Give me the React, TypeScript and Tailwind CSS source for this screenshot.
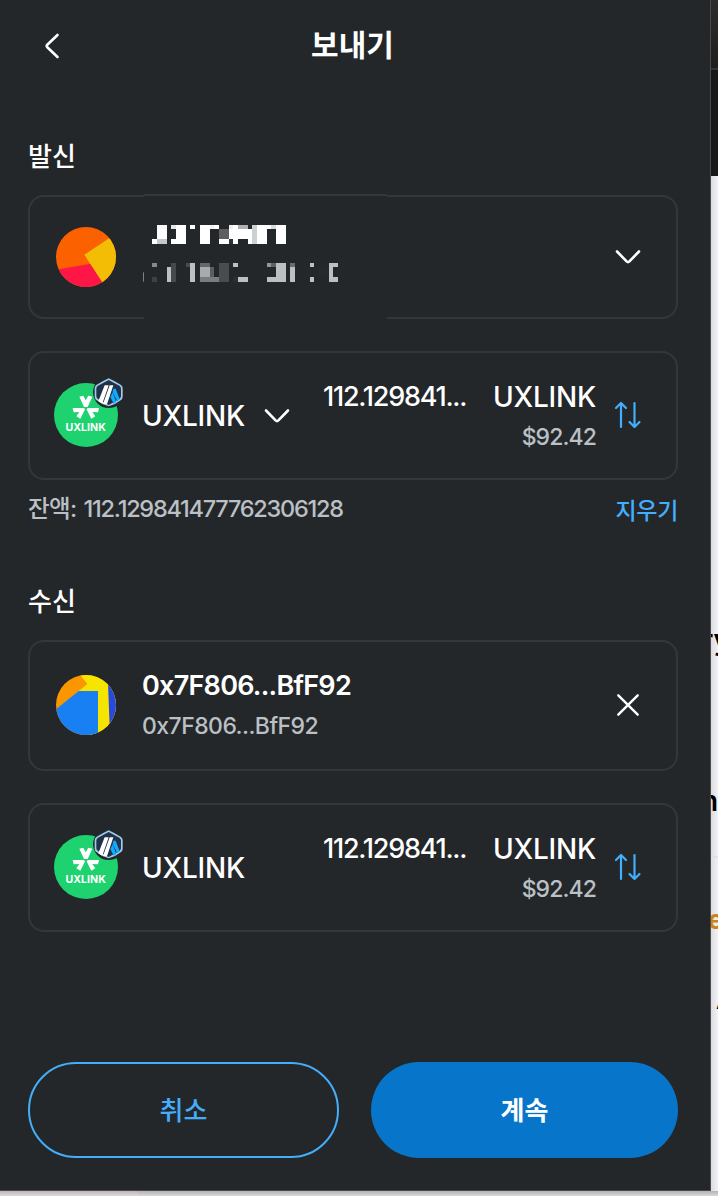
import React from 'react';

const W = '#ffffff';
const L = '#bbc0c5';

// [x, y, width, height, fill]
const nameBlocks: [number, number, number, number, string][] = [
  [36, 72, 15, 15, W],
  [51, 30, 30, 12, '#f8f8f8'],
  [51, 42, 30, 30, W],
  [51, 72, 30, 15, '#c4c8c8'],
  [93, 30, 15, 12, '#e6e7e8'],
  [93, 72, 15, 15, W],
  [108, 30, 30, 57, W],
  [150, 30, 15, 12, W],
  [180, 30, 30, 57, W],
  [210, 30, 12, 12, '#f2f2f2'],
  [222, 30, 15, 12, W],
  [237, 42, 30, 30, '#5d5e60'],
  [237, 72, 30, 15, W],
  [267, 30, 12, 12, '#eeeeee'],
  [267, 42, 12, 30, W],
  [267, 72, 12, 15, '#303336'],
  [279, 30, 15, 57, W],
  [294, 30, 30, 12, '#afb0b2'],
  [294, 42, 30, 30, W],
  [324, 42, 12, 30, W],
  [324, 72, 12, 15, W],
  [336, 30, 15, 57, '#cdd0d0'],
  [351, 30, 30, 57, W],
  [381, 30, 12, 12, W],
  [393, 30, 15, 12, '#dadcdc'],
  [408, 30, 30, 57, W],
  [9, 172, 3, 28, '#7d8184'],
  [36, 144, 15, 12, '#85898c'],
  [36, 186, 15, 15, '#3e4144'],
  [81, 156, 12, 45, L],
  [93, 144, 15, 57, '#46494c'],
  [138, 144, 12, 12, '#484b4e'],
  [150, 144, 15, 57, L],
  [180, 144, 30, 12, '#64676a'],
  [180, 156, 30, 30, '#a7abaf'],
  [210, 156, 12, 30, '#5b5e61'],
  [180, 186, 57, 15, '#797d80'],
  [237, 144, 30, 57, '#4a4d50'],
  [279, 144, 15, 12, L],
  [279, 186, 15, 15, '#2c2f32'],
  [294, 186, 30, 15, L],
  [381, 144, 12, 12, '#929699'],
  [393, 144, 15, 12, '#5f6265'],
  [408, 144, 30, 57, L],
  [381, 186, 27, 15, L],
  [450, 144, 15, 12, '#6a6d70'],
  [450, 156, 15, 45, L],
  [510, 144, 12, 12, L],
  [510, 186, 12, 15, L],
  [537, 156, 30, 30, '#26292c'],
  [567, 144, 27, 12, L],
  [567, 156, 12, 30, L],
  [567, 186, 27, 15, L],
];

const TokenLogo: React.FC = () => (
  <svg width="80" height="85" viewBox="0 0 240 255" className="block shrink-0">
    <circle cx="108" cy="135" r="96" fill="#1dd26f" />
    <g fill="#fff">
      <path d="M88 80 L100 77 L107 91 L115 77 L127 80 L113 111 L102 111 Z" />
      <path d="M68 114 H99 C105 115 106 118 103 122 L91 146 L79 139 L88 126 L71 127 Z" />
      <path d="M147 114 H116 C110 115 109 118 112 122 L124 146 L136 139 L127 126 L144 127 Z" />
    </g>
    <text x="107" y="183" textAnchor="middle" textLength="121" lengthAdjust="spacingAndGlyphs" fontFamily="Inter, sans-serif" fontWeight="700" fontSize="32" fill="#fff">UXLINK</text>
    <circle cx="176" cy="67" r="47" fill="#24272a" />
    <path d="M176 25 Q195 34 212 44 Q218 48 218 55 V80 Q218 87 212 91 Q195 105 176 109 Q157 105 140 91 Q134 87 134 80 V55 Q134 48 140 44 Q157 34 176 25 Z" fill="#9dccec" />
    <path d="M176 30 L208 47 Q213 50 213 56 V78 Q213 84 208 87 L176 105 L144 87 Q139 84 139 78 V56 Q139 50 144 47 Z" fill="#213147" />
    <path d="M164 46 H176 L157 101 L145 94 Z M179 46 H190 L171 103 L159 102 Z" fill="#fff" />
    <path d="M190 56 L197 56 L209 88 L202 94 L188 66 Z M184 75 L188 67 L199 96 L191 101 L181 81 Z" fill="#12aaff" />
  </svg>
);

const SwapArrows: React.FC = () => (
  <svg width="28" height="28" viewBox="0 0 28 28" fill="none" stroke="#43aefc" strokeWidth="2.2" strokeLinecap="round" strokeLinejoin="round" className="block shrink-0">
    <path d="M7 26V2M2 7L7 2l5 5M20.5 2v24M15.5 21l5 5 5-5" />
  </svg>
);

const Chevron: React.FC = () => (
  <svg width="26" height="16" viewBox="0 0 26 16" fill="none" stroke="#fff" strokeWidth="2.6" strokeLinecap="round" strokeLinejoin="round" className="block shrink-0">
    <path d="M2 2.5L11.6 12.4Q13 13.7 14.4 12.4L24 2.5" />
  </svg>
);

const AssetCard: React.FC<{ selectable?: boolean }> = ({ selectable }) => (
  <div className="h-[129px] border-2 border-[#34373a] rounded-2xl flex items-start">
    <div className="w-28 pl-5 pt-[17px] shrink-0">
      <TokenLogo />
    </div>
    <div className="w-[181px] h-[126px] flex items-center gap-[19px] text-[28px] font-medium text-white shrink-0">
      <span className="tracking-[-0.2px]">UXLINK</span>
      {selectable && <Chevron />}
    </div>
    <div className="w-[273px] pt-6 shrink-0">
      <div className="flex justify-between text-[28px] leading-10 font-medium text-white">
        <span className="text-[27px] tracking-[-1.25px]">112.129841...</span>
        <span className="tracking-[-0.2px]">UXLINK</span>
      </div>
      <div className="text-right text-[23px] leading-10 font-medium text-[#bbc0c5] tracking-[-0.9px]">$92.42</div>
    </div>
    <div className="pl-[18px] pt-[48px]">
      <SwapArrows />
    </div>
  </div>
);

const SendPanel: React.FC = () => (
  <main className="w-[711px] h-[1191px] bg-[#24272a] border-r border-b border-[#484b4c] px-7 shrink-0">
    <header className="h-[90px] flex items-center">
      <svg width="20" height="28" viewBox="0 0 20 28" fill="none" stroke="#fff" strokeWidth="2.6" strokeLinecap="round" strokeLinejoin="round" className="ml-4 mt-px">
        <path d="M13.5 3L3.3 12.8Q2 14 3.3 15.2L13.5 25" />
      </svg>
      <h1 className="w-[577px] text-center text-[30px] font-bold text-white leading-10">보내기</h1>
    </header>

    <h2 className="h-[105px] pt-[47px] text-[26px] leading-10 font-medium text-white">발신</h2>
    <div className="relative w-[650px] h-[124px] border-2 border-[#34373a] rounded-2xl flex items-center justify-between pl-[26px] pr-[35px]">
      <svg width="60" height="60" viewBox="0 0 180 180" className="rounded-full">
        <path fill="#fc6100" d="M0 0h180v180H0z" />
        <path fill="#fe1646" d="M0 128L112 109 160 180H0z" />
        <path fill="#f3bc05" d="M85 83L180 20V180H148z" />
      </svg>
      <Chevron />
      <div className="absolute left-[114px] -top-[3px] w-[243px] h-[127px] bg-[#24272a] border-t-2 border-[#34373a]" />
      <svg width="205" height="80" viewBox="0 0 615 240" className="absolute left-[110px] top-[18px]">
        {nameBlocks.map(([x, y, w, h, fill], i) => (
          <rect key={i} x={x} y={y} width={w} height={h} fill={fill} />
        ))}
      </svg>
    </div>

    <div className="w-[650px] mt-8">
      <AssetCard selectable />
      <div className="h-[60px] pt-[9px] flex justify-between text-[23.5px] leading-10 font-medium text-[#bbc0c5]">
        <div className="flex gap-[7px]">
          <span className="tracking-[-0.6px]">잔액:</span>
          <span className="tracking-[-1.25px]">112.129841477762306128</span>
        </div>
        <span className="text-[23px] text-[#43aefc] pt-[2px] tracking-[-0.3px]">지우기</span>
      </div>
    </div>

    <h2 className="h-[100px] pt-[42px] text-[26px] leading-10 font-medium text-white">수신</h2>
    <div className="w-[650px] h-[131px] border-2 border-[#34373a] rounded-2xl flex items-center pl-[26px] pb-px">
      <svg width="60" height="60" viewBox="0 0 180 180" className="rounded-full">
        <path fill="#fa9600" d="M0 0h180v180H0z" />
        <path fill="#f6e500" d="M73 0H180V180H100L60 55 94 27z" />
        <path fill="#2649df" d="M155 0H180V180H162z" />
        <path fill="#1880f2" d="M0 103L68 48H126V180H0z" />
      </svg>
      <div className="w-[446px] ml-[26px] pt-[2px]">
        <div className="text-[27px] leading-10 font-semibold text-white tracking-[-0.75px]">0x7F806...BfF92</div>
        <div className="text-[23px] leading-10 font-medium text-[#bbc0c5] tracking-[-0.55px]">0x7F806...BfF92</div>
      </div>
      <svg width="24" height="24" viewBox="0 0 24 24" fill="none" stroke="#fff" strokeWidth="2.4" strokeLinecap="round" className="ml-[28px]">
        <path d="M2.3 2.3L21.7 21.7M21.7 2.3L2.3 21.7" />
      </svg>
    </div>

    <div className="w-[650px] mt-8">
      <AssetCard />
    </div>

    <div className="w-[650px] mt-[130px] flex gap-8 text-[26px] font-bold">
      <button className="w-[311px] h-24 rounded-full border-2 border-[#43aefc] text-[#43aefc] font-medium">취소</button>
      <button className="w-[307px] h-24 rounded-full bg-[#0775c9] text-white">계속</button>
    </div>
  </main>
);

const App: React.FC = () => {
  return (
    <div className="w-[718px] h-[1196px] overflow-hidden flex flex-col font-['Inter','Noto_Sans_CJK_KR',sans-serif] bg-[#f2f2f6]">
      <div className="flex">
        <SendPanel />
        <aside className="relative w-[7px] h-[1191px] overflow-hidden bg-linear-to-r from-[#dcdce0] to-[#f2f2f6] text-black">
          <div className="h-[68px] bg-linear-to-b from-[#2e2d2b] to-[#201e1c]" />
          <div className="h-[2px] bg-[#353535]" />
          <div className="h-[106px] bg-[#18181b]" />
          <span className="absolute -left-[9px] top-[620px] text-[28px] leading-10 font-semibold">ry</span>
          <span className="absolute -left-[10px] top-[781px] text-[28px] leading-10 font-semibold">n</span>
          <div className="absolute left-0 top-[856px] w-[7px] h-[2px] bg-[#e2e2e6]" />
          <span className="absolute -left-[3px] top-[900px] text-[26px] leading-10 font-bold text-[#d08312]">e</span>
          <span className="absolute left-[5px] top-[981px] text-[24px] leading-10">A</span>
        </aside>
      </div>
      <div className="h-[5px] flex">
        <div className="w-[138px] bg-linear-to-b from-[#bdb6b6] to-[#dfd9da]" />
        <div className="flex-1 bg-linear-to-b from-[#b2b2b4] to-[#d8d8dc]" />
      </div>
    </div>
  );
};

export default App;
